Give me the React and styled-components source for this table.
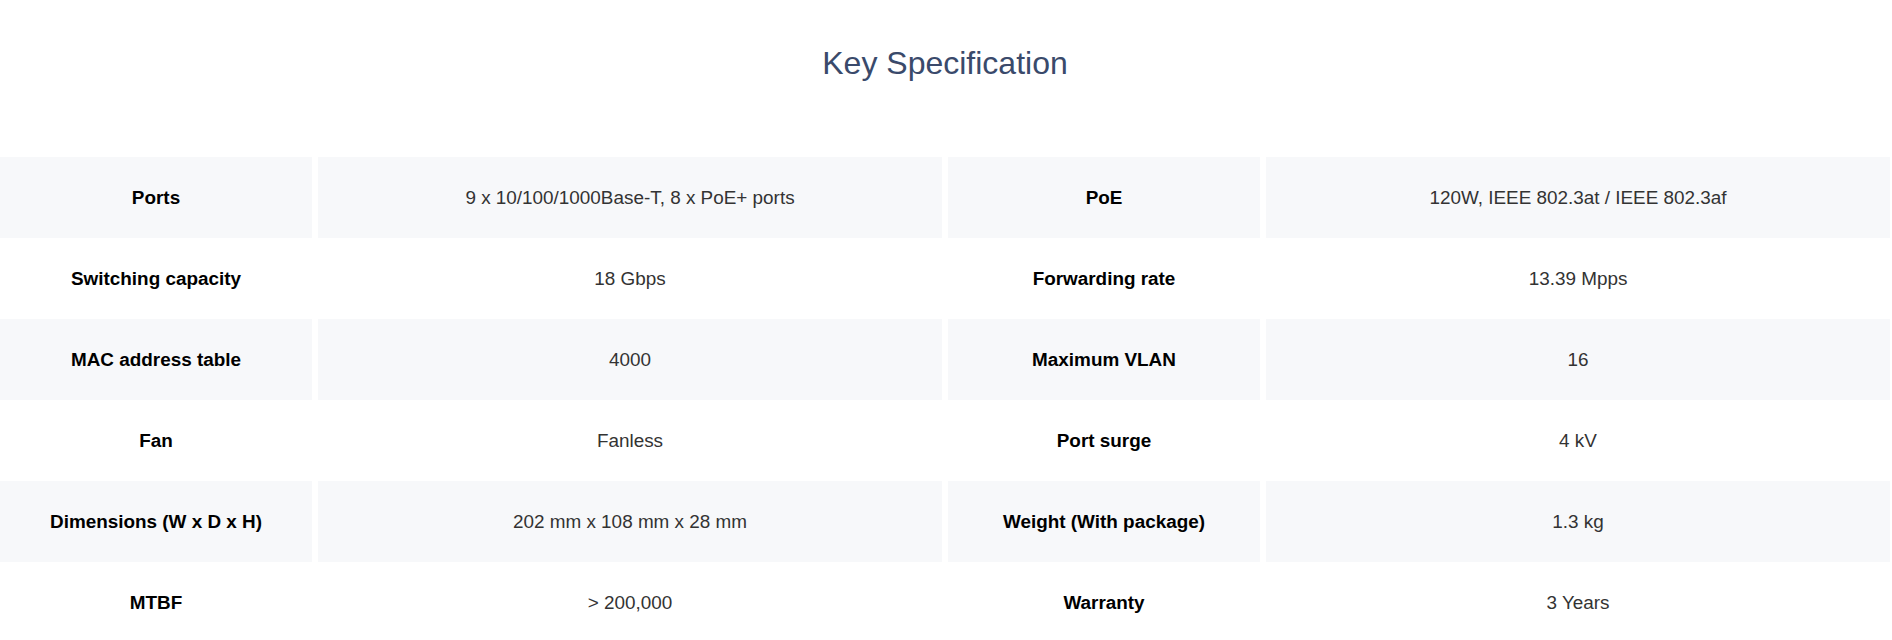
import React from 'react';
import styled, {createGlobalStyle} from 'styled-components';

const GlobalStyle = createGlobalStyle`
  html, body {
    margin: 0;
    padding: 0;
    background: #fff;
  }

  body {
    font-family: "Liberation Sans", Arial, sans-serif;
  }
`

const Section = styled.section`
  box-sizing: border-box;
  width: 1890px;
  padding-top: 43px;
`

const Title = styled.h2`
  margin: 0 0 74px 0;
  font-size: 32px;
  line-height: 40px;
  font-weight: 400;
  text-align: center;
  color: #3a4a6b;
`

const Table = styled.div`
  display: grid;
  grid-template-columns: 1fr 2fr 1fr 2fr;
  column-gap: 6px;
`

const Cell = styled.div`
  display: flex;
  align-items: center;
  justify-content: center;
  height: 81px;
  font-size: 18.9px;
  text-align: center;
  background: ${props => props.$shaded ? '#f7f8fa' : '#fff'};
  font-weight: ${props => props.$label ? 700 : 400};
  color: ${props => props.$label ? '#000' : '#333'};
`

const specs = [
    ['Ports', '9 x 10/100/1000Base-T, 8 x PoE+ ports', 'PoE', '120W, IEEE 802.3at / IEEE 802.3af'],
    ['Switching capacity', '18 Gbps', 'Forwarding rate', '13.39 Mpps'],
    ['MAC address table', '4000', 'Maximum VLAN', '16'],
    ['Fan', 'Fanless', 'Port surge', '4 kV'],
    ['Dimensions (W x D x H)', '202 mm x 108 mm x 28 mm', 'Weight (With package)', '1.3 kg'],
    ['MTBF', '> 200,000', 'Warranty', '3 Years'],
];

const App = () => {
    return (
        <>
            <GlobalStyle/>
            <Section>
                <Title>Key Specification</Title>
                <Table>
                    {specs.map((row, i) => row.map((text, j) => (
                        <Cell key={`${i}-${j}`} $shaded={i % 2 === 0} $label={j % 2 === 0}>
                            {text}
                        </Cell>
                    )))}
                </Table>
            </Section>
        </>
    );
};

export default App;
